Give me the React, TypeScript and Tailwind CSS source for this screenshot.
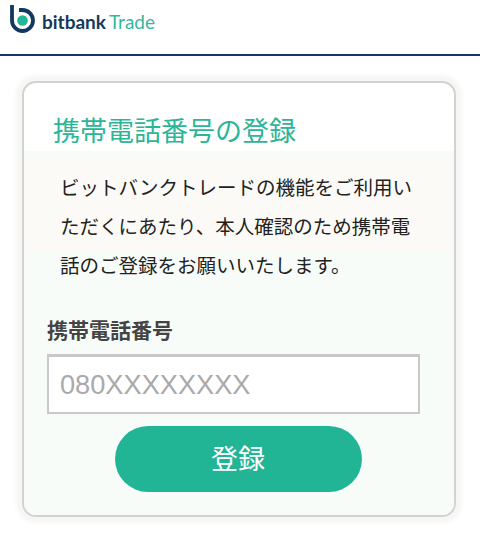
import type { JSX } from "react";

const jp = "font-['Noto_Sans_CJK_JP','Noto_Sans',sans-serif]";

function Logo(): JSX.Element {
  return (
    <svg width="25" height="29" viewBox="0 0 25 29" className="shrink-0" aria-hidden="true">
      <path
        d="M2 0V15.5A10.5 10.5 0 1 0 12.5 5H9"
        fill="none"
        stroke="#11395f"
        strokeWidth="3.8"
      />
      <circle cx="12.5" cy="15.5" r="5.3" fill="#22b596" />
    </svg>
  );
}

export default function App(): JSX.Element {
  return (
    <div className={`h-[539px] w-[480px] overflow-hidden bg-white ${jp}`}>
      <header className="flex h-[56px] items-start gap-[7px] border-b-2 border-[#15395b] pl-[10px] pt-[5px]">
        <Logo />
        <span className="mt-[5px] font-['Lato',sans-serif] text-[19px] leading-[24px]">
          <span className="font-bold text-[#15395b]">bitbank</span>
          <span className="ml-[3px] font-normal text-[#35b79b]">Trade</span>
        </span>
      </header>

      <div className="pl-[22px] pt-[25px]">
        <main className="h-[436px] w-[434px] rounded-[14px] border-2 border-[#d2d2d0] bg-white shadow-[0_0_4px_6px_#f6f6f4]">
          <h1 className="pl-[29px] pt-[26px] text-[27px] font-normal leading-[42px] text-[#2cb596]">
            携帯電話番号の登録
          </h1>
          <div className="h-[364px] rounded-b-[12px] bg-[#f7fcf9]">
            <p className="bg-[linear-gradient(#f7fcf9_9px,#fbfaf6_9px,#fbfaf6_100px,#f7fcf9_100px)] pl-[36px] pr-[40px] pt-[16px] text-[19.5px] leading-[39px] text-[#222222]">
              ビットバンクトレードの機能をご利用いただくにあたり、本人確認のため携帯電話のご登録をお願いいたします。
            </p>
            <div className="px-[23px] pt-[29px]">
              <label className="block text-[21px] font-bold leading-[32px] text-[#444444]">携帯電話番号</label>
              <input
                readOnly
                placeholder="080XXXXXXXX"
                className="mt-[9px] h-[60px] w-[373px] border-2 border-t-[3px] border-[#c8c8c8] bg-white px-[11px] font-['Liberation_Sans',sans-serif] text-[27.2px] outline-none placeholder:text-[#aaaaaa]"
              />
              <div className="mt-[12px] flex justify-center pr-[2px]">
                <button
                  type="button"
                  className="h-[66px] w-[247px] rounded-full bg-[#21b596] pb-[3px] text-[27px] leading-none text-white"
                >
                  登録
                </button>
              </div>
            </div>
          </div>
        </main>
      </div>
    </div>
  );
}
